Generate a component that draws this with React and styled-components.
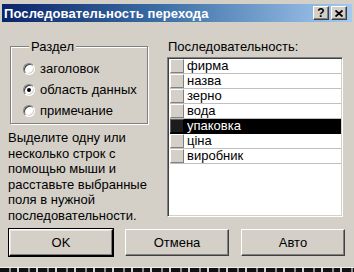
import styled, { createGlobalStyle, css } from 'styled-components'

const GlobalStyle = createGlobalStyle`
  html, body {
    margin: 0;
    background: #d4d0c8;
  }
  body {
    font-family: 'Liberation Sans', Arial, sans-serif;
    font-size: 13px;
    color: #000;
  }
`

const raised = css`
  border: 1px solid;
  border-color: #fff #404040 #404040 #fff;
  box-shadow: inset -1px -1px 0 #808080, inset 1px 1px 0 #d4d0c8;
`

const Window = styled.div`
  width: 354px;
  height: 272px;
  box-sizing: border-box;
  padding: 0 2px;
  display: flex;
  flex-direction: column;
  background: #d4d0c8;
  overflow: hidden;
`

const TitleBar = styled.div`
  margin-top: 4px;
  height: 18px;
  display: flex;
  align-items: center;
  justify-content: space-between;
  padding-left: 2px;
  background: linear-gradient(to right, #0a246a, #3a6ea5 45%, #a6caf0);
`

const Title = styled.span`
  color: #fff;
  font-weight: bold;
  font-size: 13px;
  letter-spacing: 0.1px;
`

const Controls = styled.div`
  display: flex;
  gap: 2px;
  margin-right: 5px;
`

const ControlButton = styled.div`
  ${raised};
  width: 16px;
  height: 14px;
  box-sizing: border-box;
  background: #d4d0c8;
  display: flex;
  align-items: center;
  justify-content: center;
  font-weight: bold;
  font-size: 12px;
  line-height: 12px;
`

const Body = styled.div`
  display: grid;
  grid-template-columns: 150px 176px;
  column-gap: 9px;
  padding: 17px 0 0 6px;
`

const LeftColumn = styled.div`
  display: flex;
  flex-direction: column;
`

const Group = styled.fieldset`
  margin: 0 0 0 2px;
  width: 138px;
  box-sizing: border-box;
  padding: 4px 0 2px 12px;
  border: 1px solid #808080;
  box-shadow: 1px 1px 0 #fff, inset 1px 1px 0 #fff;
`

const Legend = styled.legend`
  margin-left: 6px;
  padding: 0 2px;
  line-height: 15px;
  background: #d4d0c8;
`

const RadioRow = styled.label`
  display: flex;
  align-items: center;
  gap: 5px;
  height: 21px;
`

const RadioCircle = styled.span`
  width: 12px;
  height: 12px;
  box-sizing: border-box;
  border-radius: 50%;
  background: #fff;
  border: 1px solid;
  border-color: #808080 #fff #fff #808080;
  box-shadow: inset 1px 1px 0 #404040, inset -1px -1px 0 #d4d0c8;
  display: flex;
  align-items: center;
  justify-content: center;

  &::after {
    content: '';
    width: 4px;
    height: 4px;
    border-radius: 50%;
    background: ${p => (p.$checked ? '#000' : 'transparent')};
  }
`

const Help = styled.p`
  margin: 6px 0 0;
  line-height: 15.5px;
`

const RightColumn = styled.div`
  display: flex;
  flex-direction: column;
`

const ListLabel = styled.div`
  line-height: 15px;
  padding-left: 1px;
  margin-bottom: 3px;
`

const List = styled.div`
  height: 160px;
  box-sizing: border-box;
  background: #fff;
  border: 1px solid;
  border-color: #808080 #fff #fff #808080;
  box-shadow: inset 1px 1px 0 #404040, inset -1px -1px 0 #d4d0c8;
  padding: 1px 1px 1px 2px;
  display: flex;
  flex-direction: column;
`

const Row = styled.div`
  display: flex;
  height: 15px;
  box-sizing: border-box;
  background: ${p => (p.$selected ? '#000' : '#fff')};
  color: ${p => (p.$selected ? '#fff' : '#000')};
  border-bottom: 1px solid ${p => (p.$selected ? '#000' : '#c0c0c0')};
`

const Selector = styled.div`
  width: 14px;
  flex: none;
  box-sizing: border-box;
  background: ${p => (p.$selected ? '#1c1c1c' : '#d4d0c8')};
  border: 1px solid;
  border-color: ${p => (p.$selected ? '#606060 #000 #000 #606060' : '#fff #808080 #808080 #fff')};
`

const RowText = styled.span`
  padding-left: 3px;
  line-height: 14px;
`

const ButtonRow = styled.div`
  display: grid;
  grid-template-columns: repeat(3, 104px);
  column-gap: 12px;
  margin: 6px 0 0 7px;
`

const Button = styled.div`
  height: 27px;
  box-sizing: border-box;
  display: flex;
  align-items: center;
  justify-content: center;
  background: #d4d0c8;
  border: 1px solid;
  border-color: #fff #404040 #404040 #fff;
  box-shadow: inset -1px -1px 0 #808080;
  ${p => p.$default && css`
    outline: 1px solid #000;
    outline-offset: 0;
    border-color: #fff #000 #000 #fff;
    box-shadow: inset -1px -1px 0 #808080, inset 1px 1px 0 #e8e6e0;
  `}
`

const Footer = styled.div`
  margin: auto -2px 0;
  height: 4px;
  border-top: 1px solid #efefef;
  background: repeating-linear-gradient(to right, #111 0 9px, #8a8a8a 9px 11px, #111 11px 17px, #cfcfcf 17px 19px);
`

const sections = [
  { label: 'заголовок', checked: false },
  { label: 'область данных', checked: true },
  { label: 'примечание', checked: false },
]

const fields = ['фирма', 'назва', 'зерно', 'вода', 'упаковка', 'ціна', 'виробник']

function CloseIcon () {
  return (
    <svg width='8' height='7' viewBox='0 0 8 7'>
      <path d='M0.5 0.5 L7.5 6.5 M7.5 0.5 L0.5 6.5' stroke='#000' strokeWidth='1.8' />
    </svg>
  )
}

export default function App () {
  return (
    <Window>
      <GlobalStyle />
      <TitleBar>
        <Title>Последовательность перехода</Title>
        <Controls>
          <ControlButton>?</ControlButton>
          <ControlButton><CloseIcon /></ControlButton>
        </Controls>
      </TitleBar>
      <Body>
        <LeftColumn>
          <Group>
            <Legend>Раздел</Legend>
            {sections.map(s => (
              <RadioRow key={s.label}>
                <RadioCircle $checked={s.checked} />
                {s.label}
              </RadioRow>
            ))}
          </Group>
          <Help>
            Выделите одну или<br />
            несколько строк с<br />
            помощью мыши и<br />
            расставьте выбранные<br />
            поля в нужной<br />
            последовательности.
          </Help>
        </LeftColumn>
        <RightColumn>
          <ListLabel>Последовательность:</ListLabel>
          <List>
            {fields.map(f => (
              <Row key={f} $selected={f === 'упаковка'}>
                <Selector $selected={f === 'упаковка'} />
                <RowText>{f}</RowText>
              </Row>
            ))}
          </List>
        </RightColumn>
      </Body>
      <ButtonRow>
        <Button $default>OK</Button>
        <Button>Отмена</Button>
        <Button>Авто</Button>
      </ButtonRow>
      <Footer />
    </Window>
  )
}
